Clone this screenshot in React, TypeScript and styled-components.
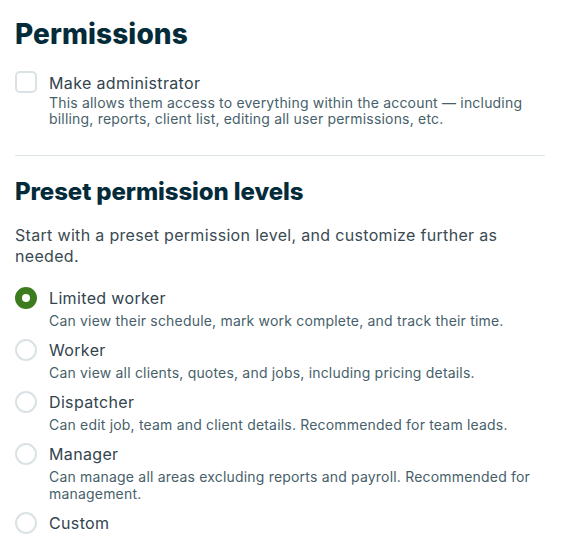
import React, { useState } from "react";
import styled, { createGlobalStyle } from "styled-components";

const GlobalStyle = createGlobalStyle`
  html, body {
    margin: 0;
    padding: 0;
    background: #ffffff;
  }
  body {
    font-family: Inter, "Noto Sans", "Liberation Sans", sans-serif;
    -webkit-font-smoothing: antialiased;
  }
`;

const Page = styled.div`
  width: 530px;
  padding: 16px 0 0 15px;
  display: flex;
  flex-direction: column;
`;

const Title = styled.h1`
  margin: 0;
  font-size: 28px;
  line-height: 36px;
  font-weight: 800;
  color: #032b3a;
  letter-spacing: 0.1px;
`;

const SubTitle = styled.h2`
  margin: 0;
  font-size: 24px;
  line-height: 30px;
  font-weight: 800;
  color: #032b3a;
  letter-spacing: -0.1px;
`;

const Option = styled.label`
  display: flex;
  align-items: flex-start;
  gap: 12px;
  cursor: pointer;
`;

const CheckBox = styled.span`
  flex: none;
  box-sizing: border-box;
  width: 22px;
  height: 22px;
  margin-top: 0;
  border: 2px solid #dbe2e5;
  border-radius: 5px;
  background: #fff;
`;

const Radio = styled.span<{ $checked: boolean }>`
  flex: none;
  box-sizing: border-box;
  width: 22px;
  height: 22px;
  margin-top: 1px;
  border-radius: 50%;
  border: ${(p) => (p.$checked ? "7px solid #3d7c1e" : "2px solid #dbe2e5")};
  background: #fff;
`;

const OptionText = styled.div<{ $gap: number }>`
  display: flex;
  flex-direction: column;
  gap: ${(p) => p.$gap}px;
`;

const OptionLabel = styled.span`
  font-size: 16px;
  line-height: 24px;
  color: #32444e;
  letter-spacing: 0.35px;
`;

const OptionDesc = styled.span<{ $lh: number }>`
  font-size: 14px;
  line-height: ${(p) => p.$lh}px;
  color: #475f6b;
  letter-spacing: 0.19px;
`;

const AdminSection = styled.div`
  margin-top: 19px;
  padding-bottom: 28px;
  border-bottom: 1px solid #dce3e6;
`;

const Intro = styled.p`
  margin: 18px 0 19px;
  font-size: 16px;
  line-height: 21px;
  color: #3a4a52;
  letter-spacing: 0.32px;
`;

const RadioList = styled.div`
  display: flex;
  flex-direction: column;
  gap: 9px;
`;

const Section = styled.div`
  margin-top: 21px;
`;

const levels = [
  {
    id: "limited",
    label: "Limited worker",
    desc: "Can view their schedule, mark work complete, and track their time.",
  },
  {
    id: "worker",
    label: "Worker",
    desc: "Can view all clients, quotes, and jobs, including pricing details.",
  },
  {
    id: "dispatcher",
    label: "Dispatcher",
    desc: "Can edit job, team and client details. Recommended for team leads.",
  },
  {
    id: "manager",
    label: "Manager",
    desc: "Can manage all areas excluding reports and payroll. Recommended for management.",
  },
  { id: "custom", label: "Custom", desc: "" },
];

export default function App() {
  const [level, setLevel] = useState("limited");
  return (
    <>
      <GlobalStyle />
      <Page>
        <Title>Permissions</Title>
        <AdminSection>
          <Option>
            <CheckBox />
            <OptionText $gap={0}>
              <OptionLabel>Make administrator</OptionLabel>
              <OptionDesc $lh={16}>
                This allows them access to everything within the account — including
                billing, reports, client list, editing all user permissions, etc.
              </OptionDesc>
            </OptionText>
          </Option>
        </AdminSection>
        <Section>
          <SubTitle>Preset permission levels</SubTitle>
          <Intro>
            Start with a preset permission level, and customize further as needed.
          </Intro>
          <RadioList>
            {levels.map((l) => (
              <Option key={l.id} onClick={() => setLevel(l.id)}>
                <Radio $checked={level === l.id} />
                <OptionText $gap={2}>
                  <OptionLabel>{l.label}</OptionLabel>
                  {l.desc && <OptionDesc $lh={17}>{l.desc}</OptionDesc>}
                </OptionText>
              </Option>
            ))}
          </RadioList>
        </Section>
      </Page>
    </>
  );
}
